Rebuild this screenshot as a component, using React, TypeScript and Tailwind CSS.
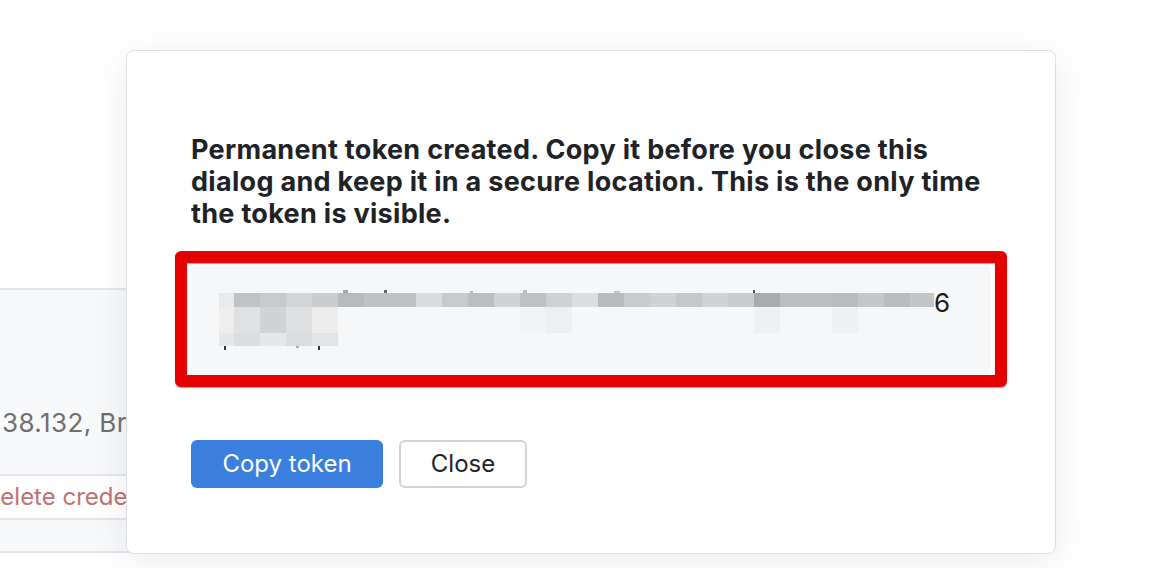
import React from 'react';

const ROW1 = [
  '#c0c3c4', '#c8c9cb', '#d3d4d6', '#c9cdcf', '#b8b9bb', '#c0c1c3', '#c0c1c3', '#dadbdd', '#c8c9cb',
  '#babebf', '#d2d3d5', '#bfc0c2', '#cfd0d2', '#dcdde0', '#b8babb', '#c9cacc', '#d0d1d3', '#c6c7c9',
  '#d1d2d4', '#cacbcd', '#a9acad', '#bbbebf', '#bcbdbf', '#b9bbbc', '#c5c6c8', '#babdbe', '#c3c5c6',
];
const ROW2: Record<number, string> = {
  0: '#e0e1e2', 1: '#d2d3d4', 2: '#dfe0e1', 3: '#ececed', 11: '#f1f3f4', 12: '#eeeff0', 20: '#eff0f1', 23: '#eff0f1',
};
const ROW3 = ['#dcdddf', '#e6e7e8', '#dcdddf', '#e2e3e4'];

// pixelated (redacted) token text
function Mosaic() {
  return (
    <svg width="715" height="61" viewBox="0 0 715 61" aria-hidden="true">
      <rect x="0" y="3" width="15" height="14" fill="#e9eaeb" />
      <rect x="0" y="17" width="15" height="26" fill="#eeeeef" />
      <rect x="0" y="43" width="15" height="13" fill="#e6e7e8" />
      {ROW1.map((c, i) => (
        <rect key={`a${i}`} x={15 + i * 26} y="3" width={i === 26 ? 24 : 26} height="14" fill={c} />
      ))}
      {Object.entries(ROW2).map(([i, c]) => (
        <rect key={`b${i}`} x={15 + Number(i) * 26} y="17" width="26" height="26" fill={c} />
      ))}
      {ROW3.map((c, i) => (
        <rect key={`c${i}`} x={15 + i * 26} y="43" width="26" height="13" fill={c} />
      ))}
      <rect x="124" y="0" width="5" height="3" fill="#a8a8a8" />
      <rect x="165" y="0" width="3" height="3" fill="#666" />
      <rect x="251" y="1" width="3" height="2" fill="#b5b5b5" />
      <rect x="304" y="0" width="4" height="3" fill="#bdbdbd" />
      <rect x="395" y="1" width="6" height="2" fill="#c4c4c4" />
      <rect x="534" y="0" width="2" height="3" fill="#555" />
      <rect x="5" y="56" width="2" height="4" fill="#333" />
      <rect x="77" y="56" width="3" height="2" fill="#aaa" />
      <rect x="99" y="56" width="2" height="4" fill="#333" />
    </svg>
  );
}

export default function App() {
  return (
    <div className="relative w-[1176px] h-[568px] overflow-hidden bg-white font-['Inter',sans-serif]">
      {/* page behind the dialog */}
      <div className="pt-[288px]">
        <div className="w-[941px] border-y-2 border-[#e2e5e9] bg-[#f8f9fa]">
          <div className="h-[184px] pt-[118px] pl-[2px]">
            <div className="w-[124px] overflow-hidden whitespace-nowrap text-[26px] leading-[30px] tracking-[0.4px] text-[#6f6f6f]">
              38.132, Browser
            </div>
          </div>
          <div className="h-[46px] border-y-2 border-[#e2e5e9] bg-white">
            <div className="w-[126px] overflow-hidden whitespace-nowrap text-[24px] leading-[42px] text-[#c27272]">
              <span className="-ml-[17px]">Delete credential</span>
            </div>
          </div>
          <div className="h-[31px]" />
        </div>
      </div>

      {/* dialog */}
      <div className="absolute left-[126px] top-[50px] w-[930px] h-[504px] rounded-lg border border-[#dde1e6] bg-white shadow-[0_8px_40px_rgba(0,0,0,0.08)] pt-[83px] px-[48px]">
        <p className="ml-4 text-[27px] leading-[32px] font-bold tracking-[0.3px] text-[#202226]">
          Permanent token created. Copy it before you close this dialog and keep it in a secure location. This is the only time the token is visible.
        </p>

        <div className="mt-[21px] h-[136px] rounded-[6px] border-[12px] border-[#e50000] bg-white shadow-[0_1px_1px_rgba(0,0,0,0.35),inset_0_1px_1px_rgba(0,0,0,0.35)] py-px pl-[3px] pr-[5px]">
          <div className="h-full bg-[#f6f7f9] pt-[26px] pl-[29px]">
            <div className="flex items-start">
              <Mosaic />
              <span className="text-[26px] leading-[26px] text-[#1c1c1c]">6</span>
            </div>
          </div>
        </div>

        <div className="mt-[53px] ml-4 flex gap-4">
          <button className="w-[192px] h-[48px] rounded-md bg-[#3a7fde] text-white text-[24px]">
            Copy token
          </button>
          <button className="w-[128px] h-[48px] rounded-md border-2 border-[#cdd4dc] bg-white text-[24px] text-[#1f2328]">
            Close
          </button>
        </div>
      </div>
    </div>
  );
}
